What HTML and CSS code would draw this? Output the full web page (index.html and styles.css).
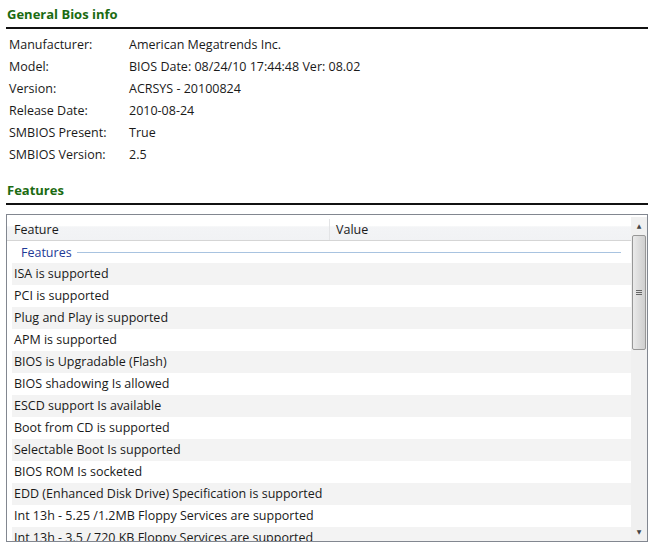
FILE: index.html
```html
<!DOCTYPE html>
<html lang="en">
<head>
    <meta charset="UTF-8">
    <title>General Bios info</title>
    <link rel="stylesheet" href="styles.css">
</head>
<body>
    <section class="section">
        <h2 class="section-title">General Bios info</h2>
        <div class="info">
            <div class="info-row"><span class="info-label">Manufacturer:</span><span>American Megatrends Inc.</span></div>
            <div class="info-row"><span class="info-label">Model:</span><span>BIOS Date: 08/24/10 17:44:48 Ver: 08.02</span></div>
            <div class="info-row"><span class="info-label">Version:</span><span>ACRSYS - 20100824</span></div>
            <div class="info-row"><span class="info-label">Release Date:</span><span>2010-08-24</span></div>
            <div class="info-row"><span class="info-label">SMBIOS Present:</span><span>True</span></div>
            <div class="info-row"><span class="info-label">SMBIOS Version:</span><span>2.5</span></div>
        </div>
    </section>

    <section class="section">
        <h2 class="section-title">Features</h2>
        <div class="listview">
            <div class="list-main">
                <div class="list-header">
                    <div class="col col-feature">Feature</div>
                    <div class="col col-value">Value</div>
                </div>
                <div class="group-row"><span>Features</span><span class="group-line"></span></div>
                <div class="rows">
                    <div class="row">ISA is supported</div>
                    <div class="row">PCI is supported</div>
                    <div class="row">Plug and Play is supported</div>
                    <div class="row">APM is supported</div>
                    <div class="row">BIOS is Upgradable (Flash)</div>
                    <div class="row">BIOS shadowing Is allowed</div>
                    <div class="row">ESCD support Is available</div>
                    <div class="row">Boot from CD is supported</div>
                    <div class="row">Selectable Boot Is supported</div>
                    <div class="row">BIOS ROM Is socketed</div>
                    <div class="row">EDD (Enhanced Disk Drive) Specification is supported</div>
                    <div class="row">Int 13h - 5.25 /1.2MB Floppy Services are supported</div>
                    <div class="row">Int 13h - 3.5 / 720 KB Floppy Services are supported</div>
                </div>
            </div>
            <div class="scrollbar">
                <div class="sb-arrow">&#9650;</div>
                <div class="sb-track">
                    <div class="sb-thumb"><span class="sb-grip"></span></div>
                </div>
                <div class="sb-arrow">&#9660;</div>
            </div>
        </div>
    </section>
</body>
</html>
```

FILE: styles.css
```css
body {
    margin: 0;
    padding: 0 7px 0 6px;
    font-family: 'Open Sans', 'DejaVu Sans', sans-serif;
    font-size: 12.5px;
    color: #1a1a1a;
    background: white;
}

.section-title {
    margin: 0;
    padding: 6px 0 4px 1px;
    font-size: 13px;
    font-weight: bold;
    color: #1b6b12;
    border-bottom: 2px solid #111;
    line-height: 17px;
}

.info {
    padding: 5px 0 10px 3px;
}

.info-row {
    display: flex;
    height: 22px;
    line-height: 22px;
}

.info-label {
    width: 120px;
}

.listview {
    margin-top: 9px;
    border: 1px solid #828790;
    height: 326px;
    display: flex;
    overflow: hidden;
}

.list-main {
    flex: 1;
    overflow: hidden;
    padding-top: 4px;
}

.list-header {
    display: flex;
    height: 21px;
    line-height: 21px;
    background: linear-gradient(to bottom, #ffffff 0%, #ffffff 35%, #f3f4f6 36%, #f1f2f4 100%);
    border-bottom: 1px solid #d5d5d5;
}

.col {
    padding-left: 7px;
}

.col-feature {
    width: 315px;
    border-right: 1px solid #e3e4e6;
}

.col-value {
    flex: 1;
    padding-left: 6px;
}

.group-row {
    display: flex;
    align-items: center;
    height: 22px;
    padding: 0 10px 0 14px;
    color: #1e3a96;
}

.group-line {
    flex: 1;
    height: 1px;
    margin-left: 5px;
    background: #a8c3e0;
}

.row {
    height: 22px;
    line-height: 22px;
    padding-left: 2px;
    margin-left: 5px;
    white-space: nowrap;
}

.row:nth-child(odd) {
    background: #f3f3f3;
}

.scrollbar {
    width: 16px;
    margin-top: 2px;
    display: flex;
    flex-direction: column;
    background: #f0f0f0;
}

.sb-arrow {
    height: 18px;
    font-size: 6px;
    line-height: 18px;
    text-align: center;
    color: #444;
}

.sb-track {
    flex: 1;
}

.sb-thumb {
    height: 115px;
    margin: 0 1px;
    border: 1px solid #979797;
    border-radius: 2px;
    background: linear-gradient(to right, #eaeaea, #dcdcdc 50%, #cfcfcf);
    display: flex;
    align-items: center;
    justify-content: center;
    box-sizing: border-box;
}

.sb-grip {
    width: 6px;
    height: 5px;
    border-top: 1px solid #666;
    border-bottom: 1px solid #666;
    background: linear-gradient(#666, #666) center / 6px 1px no-repeat;
    box-sizing: border-box;
}
```
